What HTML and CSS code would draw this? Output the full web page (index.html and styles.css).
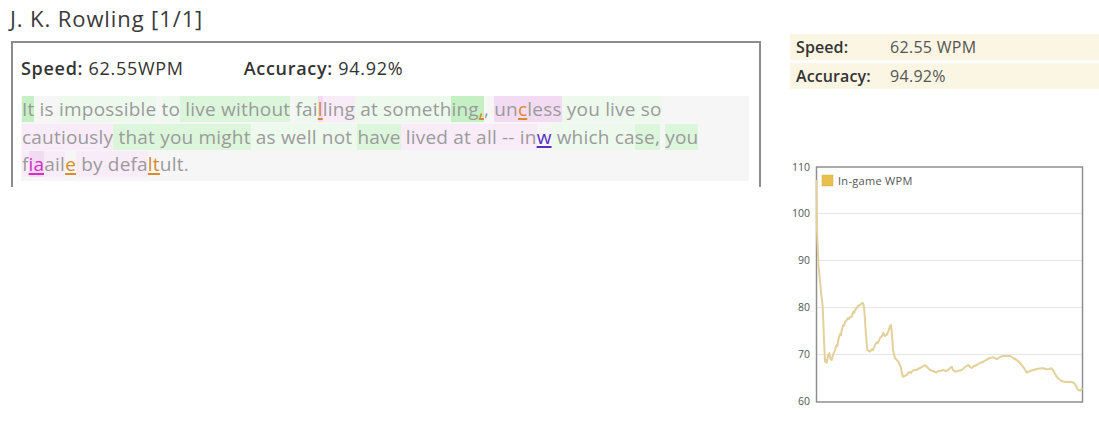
FILE: index.html
```html
<!DOCTYPE html>
<html>
<head>
<meta charset="utf-8">
<link rel="stylesheet" href="styles.css">
</head>
<body>
<div class="page">
  <div class="left">
    <h1 class="title">J. K. Rowling [1/1]</h1>
    <div class="box">
      <div class="stats">
        <div class="stat"><b>Speed:</b> 62.55WPM</div>
        <div class="stat"><b>Accuracy:</b> 94.92%</div>
      </div>
      <div class="passage"><span class="g2">It</span> is <span class="g0">impossible</span> <span class="g0">to</span><span class="g1"> live without</span> <span class="g0">fai</span><span class="p1"><u class="eo">l</u></span><span class="p0">ling</span><span class="g0"> at someth</span><span class="g2">ing<u class="eo">,</u></span>, <span class="p1">un<u class="eo">c</u>less</span><span class="g0"> you live so</span><br><span class="p0">cautiously</span><span class="g1"> that you might</span><span class="g0"> as well not </span><span class="g1">have</span><span class="p0"> lived at all -- in</span><u class="ep">w</u><span class="g0"> which ca</span><span class="g1">se,</span> <span class="g1">you</span><br><span class="p0">f</span><span class="p1"><u class="em">ia</u></span><span class="p0">ail</span><u class="eo">e</u><span class="p0"> by defa</span><u class="eo">lt</u>ult.</div>
    </div>
  </div>
  <div class="right">
    <div class="sumrow"><span class="lab">Speed:</span><span class="val">62.55 WPM</span></div>
    <div class="sumrow"><span class="lab">Accuracy:</span><span class="val">94.92%</span></div>
    <svg class="chart" width="309" height="262" viewBox="790 150 309 262">
      <g class="grid">
        <line x1="816" y1="213.5" x2="1083" y2="213.5"/>
        <line x1="816" y1="260.5" x2="1083" y2="260.5"/>
        <line x1="816" y1="307.5" x2="1083" y2="307.5"/>
        <line x1="816" y1="354.5" x2="1083" y2="354.5"/>
      </g>
      <rect class="frame" x="816.5" y="167" width="266" height="235"/>
      <g class="ylab">
        <text x="810" y="171">110</text>
        <text x="810" y="217">100</text>
        <text x="810" y="264">90</text>
        <text x="810" y="311">80</text>
        <text x="810" y="358">70</text>
        <text x="810" y="405">60</text>
      </g>
      <rect class="legsw" x="822" y="175" width="11" height="11"/>
      <text class="legtx" x="838" y="185">In-game WPM</text>
      <polyline class="wpm" points="816.5,180 817,230 818.5,265 821,292 822.7,306.7 824,340 825,361.7 826,360 826.7,362.7 828,356 829.3,353 830.5,359 831.7,360 833,355 835,350 836.5,345 837.3,346 838.3,340 840,334 841,335 841.5,331 843.3,325 844,326 845,322 846.7,320 848,318 849,319 850,317 851.7,316.7 853,312 854,313 855,310 856.7,308 858,306 860,305 861.7,303.3 863,303 864,306.7 865,320 866,335 867.3,350 870,351.7 872,349 873,350 875,345 877,342 878,343 880,338 882,336 883.3,333 885,336 886.7,335 888.5,331 890,326 891,325 892,335 893,350 895,358 898.3,361.7 900.7,366.7 902.7,376.7 904.5,376 906.7,375 908,373 910,372 911,373 913.3,370 916,370 918,369 920,368 922,367 925,365 927,367 930,370 933,371 936.7,372.7 938,371 940,371 943.3,370 946,371 948.3,370 950,368 951.7,366.7 953,370 955,371.7 958,371 961.7,370 963,369 965,367 968.3,365 970,367 971.7,368 974,366 976.7,365 980,363 983.3,361.7 986,360 990,358 993.3,357.3 995,358 996.7,359.3 1000,357 1003.3,356 1006,356 1010,356 1013,358 1016.7,360 1019,362 1021.7,365 1024,368 1026.7,372.7 1030,371 1033.3,370 1037,369 1040,368.5 1043.3,368.3 1046.7,369.3 1049,369 1051.7,368.3 1054,372 1056.7,376.7 1059,379 1061.7,381 1065,382 1070,381.7 1074,382.7 1076,386 1077.7,389.3 1080,390.7 1082.5,388.3"/>
    </svg>
  </div>
</div>
</body>
</html>
```
FILE: styles.css
```css
html, body {
  margin: 0;
  padding: 0;
  background: #ffffff;
}
.page {
  display: flex;
  font-family: "Open Sans", "Noto Sans", sans-serif;
  width: 1099px;
  height: 423px;
  overflow: hidden;
}
.left {
  width: 760px;
  padding-left: 10px;
  box-sizing: border-box;
}
.title {
  margin: 4px 0 0 0;
  font-size: 22px;
  font-weight: 400;
  line-height: 28px;
  color: #3a3a3a;
  letter-spacing: 0.9px;
}
.box {
  margin-top: 9px;
  margin-left: 1px;
  width: 750px;
  height: 146px;
  box-sizing: border-box;
  border: 2px solid #8c8c8c;
  border-bottom: none;
  padding: 13px 10px 0 8px;
}
.stats {
  display: flex;
  font-size: 18px;
  line-height: 24px;
  color: #333;
  letter-spacing: 0.7px;
}
.stat b {
  font-weight: 600;
}
.stat + .stat {
  margin-left: 60px;
}
.passage {
  margin-top: 16px;
  background: #f6f6f6;
  font-size: 19px;
  line-height: 27.5px;
  color: #9b9b9b;
  padding: 0 0 2px 1px;
  letter-spacing: 0.2px;
}
.g0 { background: #eef9ee; }
.g1 { background: #dcf6dc; }
.g2 { background: #c4f0c4; }
.p0 { background: #f8ecf8; }
.p1 { background: #f3dcf3; }
u {
  text-decoration-thickness: 2px;
  text-underline-offset: 2px;
}
.eo { color: #d88a2f; }
.em { color: #d62fc5; }
.ep { color: #5a2fc0; }
.right {
  width: 309px;
  margin-left: 30px;
  padding-top: 34px;
}
.sumrow {
  display: flex;
  height: 26px;
  align-items: center;
  background: #fbf5e4;
  font-size: 16px;
  color: #444;
  margin-bottom: 3px;
  letter-spacing: 0.3px;
}
.sumrow .lab {
  width: 100px;
  padding-left: 6px;
  font-weight: 600;
  color: #333;
  box-sizing: border-box;
  letter-spacing: 0.1px;
}
.sumrow .val {
  color: #555;
}
.chart {
  display: block;
  margin-top: 61px;
}
.grid line {
  stroke: #e6e6e6;
  stroke-width: 1;
}
.frame {
  fill: none;
  stroke: #8f8f8f;
  stroke-width: 1.5;
}
.ylab text {
  font-family: "Open Sans", sans-serif;
  font-size: 10.5px;
  fill: #555;
  text-anchor: end;
}
.legsw {
  fill: #e9c04e;
  stroke: #d8b040;
  stroke-width: 0.5;
}
.legtx {
  font-family: "Open Sans", sans-serif;
  font-size: 11px;
  fill: #555;
  letter-spacing: 0.3px;
}
.wpm {
  fill: none;
  stroke: #e3d09a;
  stroke-width: 2;
  stroke-linejoin: round;
}
```
